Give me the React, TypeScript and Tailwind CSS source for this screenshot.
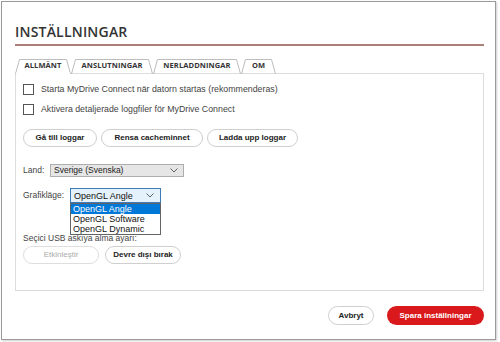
import React from "react";

const font = { fontFamily: '"Liberation Sans", Arial, sans-serif' } as const;

function Tab({ label, width, active }: { label: string; width: number; active?: boolean }) {
  return (
    <div className="relative flex h-[14px] items-center justify-center" style={{ width }}>
      <svg className="absolute inset-0" width={width} height={15} viewBox={`0 0 ${width} 15`}>
        <polygon
          points={`0.5,15 4.5,0.5 ${width - 4.5},0.5 ${width - 0.5},15`}
          fill="#ffffff"
          stroke="#bdbdbd"
          strokeWidth="1"
        />
        {active && <line x1="1" y1="14.5" x2={width - 1} y2="14.5" stroke="#ffffff" strokeWidth="2" />}
      </svg>
      <span className="relative text-[7.5px] font-bold tracking-[0.1px] text-[#333]">{label}</span>
    </div>
  );
}

function Checkbox({ label }: { label: string }) {
  return (
    <div className="flex h-[12px] items-center gap-[7px]">
      <div className="h-[11px] w-[11px] border border-[#555] bg-white" />
      <span className="text-[8.8px] leading-[12px] text-[#444]">{label}</span>
    </div>
  );
}

function Pill({ label, width, disabled }: { label: string; width: number; disabled?: boolean }) {
  return (
    <div
      className={`flex h-[18px] items-center justify-center overflow-hidden whitespace-nowrap rounded-full border bg-white text-[8px] ${
        disabled ? "border-[#dedede] font-normal text-[#aaa]" : "border-[#cfcfcf] font-bold text-[#222]"
      }`}
      style={{ width }}
    >
      {label}
    </div>
  );
}

function Chevron() {
  return (
    <svg width="8" height="5" viewBox="0 0 8 5">
      <polyline points="0.5,0.5 4,4 7.5,0.5" fill="none" stroke="#555" strokeWidth="0.9" />
    </svg>
  );
}

export default function App() {
  return (
    <div className="h-[342px] w-[500px] bg-white" style={font}>
      <div className="ml-[1px] mt-[1px] flex h-[339px] w-[495px] flex-col border border-[#9a9a9a] px-[13px] shadow-[1px_1px_2px_rgba(0,0,0,0.2)]">
        <div className="pt-[22px] text-[14px] font-semibold leading-[16px] tracking-[0.2px] text-[#333]" style={{ fontFamily: '"Open Sans", sans-serif' }}>
          INSTÄLLNINGAR
        </div>
        <div className="mt-[4px] h-[2px] w-[469px] bg-[#ad7f79]" />

        <div className="mt-[13px] flex items-end" style={{ fontFamily: '"Open Sans", sans-serif' }}>
          <Tab label="ALLMÄNT" width={56} active />
          <Tab label="ANSLUTNINGAR" width={82} />
          <Tab label="NERLADDNINGAR" width={88} />
          <Tab label="OM" width={35} />
        </div>

        <div className="flex h-[218px] w-[469px] flex-col border border-[#dcdcdc] pl-[7px] pt-[9px]">
          <Checkbox label="Starta MyDrive Connect när datorn startas (rekommenderas)" />
          <div className="mt-[8px]">
            <Checkbox label="Aktivera detaljerade loggfiler för MyDrive Connect" />
          </div>
          <div className="mt-[14px] flex gap-[4px]">
            <Pill label="Gå till loggar" width={74} />
            <Pill label="Rensa cacheminnet" width={102} />
            <Pill label="Ladda upp loggar" width={91} />
          </div>

          <div className="mt-[17px] flex h-[13px] items-center">
            <span className="w-[27px] text-[8.5px] leading-[13px] text-[#444]">Land:</span>
            <div className="flex h-[13px] w-[134px] items-center justify-between border border-[#adadad] bg-[#e6e6e6] pl-[3px] pr-[5px]">
              <span className="text-[8.5px] leading-[11px] text-[#222]">Sverige (Svenska)</span>
              <Chevron />
            </div>
          </div>

          <div className="mt-[11px] flex h-[15px] items-center">
            <span className="w-[47px] text-[8.5px] leading-[13px] text-[#444]">Grafikläge:</span>
            <div className="relative">
              <div className="flex h-[15px] w-[91px] items-center justify-between border border-[#3d7ab8] bg-[#e5f1fb] pl-[3px] pr-[6px]">
                <span className="text-[9px] leading-[12px] text-[#111]">OpenGL Angle</span>
                <Chevron />
              </div>
              <div className="absolute left-0 top-[15px] z-10 flex w-[91px] flex-col border border-[#646464] bg-white text-[9px] leading-[10px] text-[#111]">
                <div className="bg-[#0078d7] pl-[2px] text-white">OpenGL Angle</div>
                <div className="pl-[2px]">OpenGL Software</div>
                <div className="pl-[2px]">OpenGL Dynamic</div>
              </div>
            </div>
          </div>

          <div className="mt-[30px] text-[8.5px] leading-[10px] text-[#444]">Seçici USB askıya alma ayarı:</div>
          <div className="mt-[3px] flex gap-[6px]">
            <Pill label="Etkinleştir" width={76} disabled />
            <Pill label="Devre dışı bırak" width={76} />
          </div>
        </div>

        <div className="mt-[15px] flex w-[469px] justify-end gap-[13px]">
          <div className="flex h-[19px] w-[46px] items-center justify-center rounded-full border border-[#cfcfcf] bg-white text-[8px] font-bold text-[#222]">
            Avbryt
          </div>
          <div className="flex h-[19px] w-[97px] items-center justify-center rounded-full bg-[#d9191c] text-[8px] font-bold text-white">
            Spara inställningar
          </div>
        </div>
      </div>
    </div>
  );
}
